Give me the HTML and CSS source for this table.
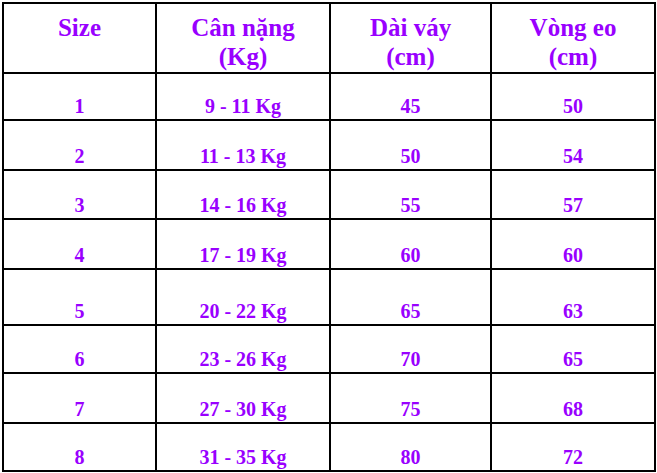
FILE: index.html
```html
<!DOCTYPE html>
<html lang="vi">
<head>
<meta charset="utf-8">
<title>Bảng size</title>
<link rel="stylesheet" href="styles.css">
</head>
<body>
<div class="page">
  <div class="size-table">
    <div class="cell head">Size</div>
    <div class="cell head">Cân nặng<br>(Kg)</div>
    <div class="cell head">Dài váy<br>(cm)</div>
    <div class="cell head">Vòng eo<br>(cm)</div>

    <div class="cell">1</div><div class="cell">9 - 11 Kg</div><div class="cell">45</div><div class="cell">50</div>
    <div class="cell">2</div><div class="cell">11 - 13 Kg</div><div class="cell">50</div><div class="cell">54</div>
    <div class="cell">3</div><div class="cell">14 - 16 Kg</div><div class="cell">55</div><div class="cell">57</div>
    <div class="cell">4</div><div class="cell">17 - 19 Kg</div><div class="cell">60</div><div class="cell">60</div>
    <div class="cell">5</div><div class="cell">20 - 22 Kg</div><div class="cell">65</div><div class="cell">63</div>
    <div class="cell">6</div><div class="cell">23 - 26 Kg</div><div class="cell">70</div><div class="cell">65</div>
    <div class="cell">7</div><div class="cell">27 - 30 Kg</div><div class="cell">75</div><div class="cell">68</div>
    <div class="cell">8</div><div class="cell">31 - 35 Kg</div><div class="cell">80</div><div class="cell">72</div>
  </div>
</div>
</body>
</html>
```
FILE: styles.css
```css
html, body {
  margin: 0;
  padding: 0;
  background: #ffffff;
}

.page {
  padding: 2px;
}

.size-table {
  display: grid;
  grid-template-columns: 153px 174px 161px 164px;
  grid-template-rows: 70px 47px 50px 49px 50px 56px 48px 50px 48px;
  width: max-content;
  border-top: 2px solid #000;
  border-left: 2px solid #000;
  font-family: "Liberation Serif", "Times New Roman", serif;
  font-weight: bold;
  color: #9900ff;
}

.cell {
  box-sizing: border-box;
  border-right: 2px solid #000;
  border-bottom: 2px solid #000;
  display: flex;
  align-items: flex-end;
  justify-content: center;
  text-align: center;
  font-size: 20px;
  line-height: 24px;
  padding-bottom: 1px;
}

.cell.head {
  align-items: flex-start;
  font-size: 25px;
  line-height: 29px;
  padding-top: 9px;
  padding-bottom: 0;
}
```
